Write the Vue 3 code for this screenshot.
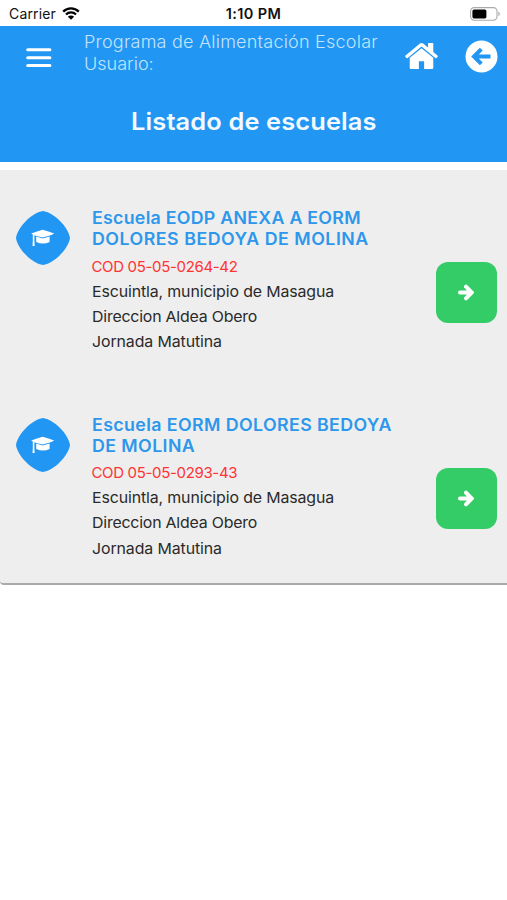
<script setup>
const schools = [
  {
    name: ['Escuela EODP ANEXA A EORM', 'DOLORES BEDOYA DE MOLINA'],
    code: 'COD 05-05-0264-42',
    place: 'Escuintla, municipio de Masagua',
    address: 'Direccion Aldea Obero',
    shift: 'Jornada Matutina',
  },
  {
    name: ['Escuela EORM DOLORES BEDOYA', 'DE MOLINA'],
    code: 'COD 05-05-0293-43',
    place: 'Escuintla, municipio de Masagua',
    address: 'Direccion Aldea Obero',
    shift: 'Jornada Matutina',
  },
]
</script>

<template>
  <div class="screen">
    <div class="status">
      <div class="carrier">
        <span>Carrier</span>
        <svg class="wifi" viewBox="0 0 18 13">
          <path d="M1.2 4.6a11 11 0 0 1 15.6 0M4 7.5a7 7 0 0 1 10 0" />
          <path class="solid" d="M9 12.8 5.9 9.7a4.4 4.4 0 0 1 6.2 0z" />
        </svg>
      </div>
      <span class="clock">1:10 PM</span>
      <svg class="battery" viewBox="0 0 31 14">
        <rect x="0.6" y="0.6" width="26.4" height="12.6" rx="3.6" fill="none" stroke="#aaa" stroke-width="1.1" />
        <rect x="2.4" y="2.4" width="14" height="9" rx="1.6" fill="#000" />
        <path d="M28.4 4.6a2.6 2.6 0 0 1 0 4.6z" fill="#aaa" />
      </svg>
    </div>

    <header class="header">
      <div class="bar">
        <svg class="menu" viewBox="0 0 26 20">
          <path d="M1.7 1.8h22.2M1.7 9.7h22.2M1.7 17.6h22.2" />
        </svg>
        <div class="who">
          <div><span class="t app">Programa de Alimentación Escolar</span></div>
          <div><span class="t user">Usuario:</span></div>
        </div>
        <svg class="home" viewBox="89 253 1614 1283">
          <path d="M1472 992v480q0 26-19 45t-45 19h-384v-384h-256v384h-384q-26 0-45-19t-19-45v-480q0-1 .5-3t.5-3l575-474 575 474q1 2 1 6zm223-69l-62 74q-8 9-21 11h-3q-13 0-21-7l-692-577-692 577q-12 8-24 7-13-2-21-11l-62-74q-8-10-7-23.5t11-21.5l719-599q32-26 76-26t76 26l244 204v-195q0-14 9-23t23-9h192q14 0 23 9t9 23v408l219 182q10 8 11 21.5t-7 23.5z" />
        </svg>
        <svg class="back" viewBox="0 0 33 33">
          <circle cx="16.500" cy="16.500" r="16" />
          <path d="M25.500 16.500H10M16.300 9.200 9 16.500 16.300 23.800" />
        </svg>
      </div>
      <h1 class="title"><span>Listado de escuelas</span></h1>
    </header>

    <main class="list">
      <article v-for="s in schools" :key="s.code" class="school">
        <svg class="badge" viewBox="0 0 54 54">
          <path d="M27 0C32 .6 39 4.8 44 10C49.2 15 53.4 22 54 27C53.4 32 49.2 39 44 44C39 49.2 32 53.4 27 54C22 53.4 15 49.2 10 44C4.8 39 .6 32 0 27C.6 22 4.8 15 10 10C15 4.8 22 .6 27 0z" fill="#2196f3" />
          <g fill="#fff">
            <path d="M15.2 22.4Q21 20.4 26.6 18.7Q32.5 20.4 38.2 22.4Q35 24 33 24.8L26.600 26.600L20.500 24.900Q17.500 23.900 15.200 22.400z" />
            <path d="M20.2 25.5L26.600 27.500L33.600 25.500V30.900Q27 34.200 20.200 30.900z" />
            <path d="M16.8 23.2 18.400 23.800V30.500L18.700 35H16.500L16.800 30.500z" />
          </g>
        </svg>
        <div class="info">
          <h2 class="name">
            <span v-for="(line, i) in s.name" :key="i" class="nline">{{ line }}</span>
          </h2>
          <p class="row code"><span>{{ s.code }}</span></p>
          <p class="row place"><span>{{ s.place }}</span></p>
          <p class="row address"><span>{{ s.address }}</span></p>
          <p class="row shift"><span>{{ s.shift }}</span></p>
        </div>
        <button class="go" type="button">
          <svg viewBox="0 0 16 17">
            <path d="M2 8.5H12M8 2.700 13.600 8.500 8 14.300" />
          </svg>
        </button>
      </article>
    </main>
  </div>
</template>

<style>
body { background: #fff; }
</style>

<style scoped>
.screen { width: 507px; height: 900px; background: #fff; font-family: Inter, sans-serif; overflow: hidden; }
.status { height: 25.5px; box-sizing: border-box; display: grid; grid-template-columns: 1fr auto 1fr; align-items: center; padding: 2px 6px 0 9px; font-size: 14px; color: #111; }
.carrier { display: flex; align-items: center; gap: 6px; letter-spacing: .15px; }
.wifi { width: 18px; height: 13px; fill: none; stroke: #000; stroke-width: 2.3; }
.wifi .solid { fill: #000; stroke: none; }
.clock { font-weight: 600; font-size: 14.5px; letter-spacing: .4px; margin-right: 3px; }
.battery { width: 31px; height: 14px; justify-self: end; }
.header { height: 136.5px; background: #2196f3; color: #fff; overflow: hidden; }
.bar { height: 62px; display: flex; align-items: flex-start; }
.menu { width: 26px; height: 20px; margin: 22px 0 0 25.5px; fill: none; stroke: #fff; stroke-width: 3; stroke-linecap: round; }
.who { flex: 1; margin-left: 32px; padding-top: 5.5px; font-weight: 300; font-size: 17px; line-height: 22px; color: #c4e4fd; white-space: nowrap; }
.t, .nline, .row span, .title span { display: inline-block; transform: scaleX(1.06); transform-origin: left; }
.app { letter-spacing: .2px; }
.title span { transform-origin: center; letter-spacing: .1px; }
.home { width: 33px; height: 28px; margin: 16.5px 27px 0 0; fill: #fff; }
.back { width: 33px; height: 33px; margin: 14px 9.5px 0 0; fill: #fff; }
.back path { fill: none; stroke: #2196f3; stroke-width: 4; }
.title { margin: 18px 0 0; text-align: center; font-size: 24px; line-height: 32px; font-weight: 600; color: #f2faff; }
.list { margin-top: 8px; height: 412.5px; background: #eee; border-bottom: 2px solid #aaa; border-radius: 0 0 0 4px; }
.school { height: 206.5px; display: flex; align-items: flex-start; }
.badge { width: 54px; height: 54px; margin: 41px 22px 0 15.5px; }
.info { width: 344.5px; padding-top: 38px; white-space: nowrap; color: #2a2a2a; }
.name { margin: 0 0 3.5px; color: #2d97ec; font-size: 16.8px; line-height: 21px; font-weight: 600; }
.nline { display: block; width: max-content; letter-spacing: .25px; }
.nline:last-child { letter-spacing: .47px; }
.school:last-child .nline { letter-spacing: .37px; }
.row { margin: 0; font-size: 15px; line-height: 25.2px; }
.code { color: #f33; }
.row.code span { transform: scaleX(1); letter-spacing: -.34px; }
.place { letter-spacing: -.12px; }
.address { letter-spacing: -.2px; }
.shift { letter-spacing: -.1px; }
.go { width: 61px; height: 61px; margin: 91.5px 0 0; padding: 0; border: 0; border-radius: 12px; background: #3c6; display: flex; align-items: center; justify-content: center; }
.go svg { width: 16px; height: 17px; margin-right: 1.5px; fill: none; stroke: #fff; stroke-width: 4; stroke-linecap: round; }
</style>
